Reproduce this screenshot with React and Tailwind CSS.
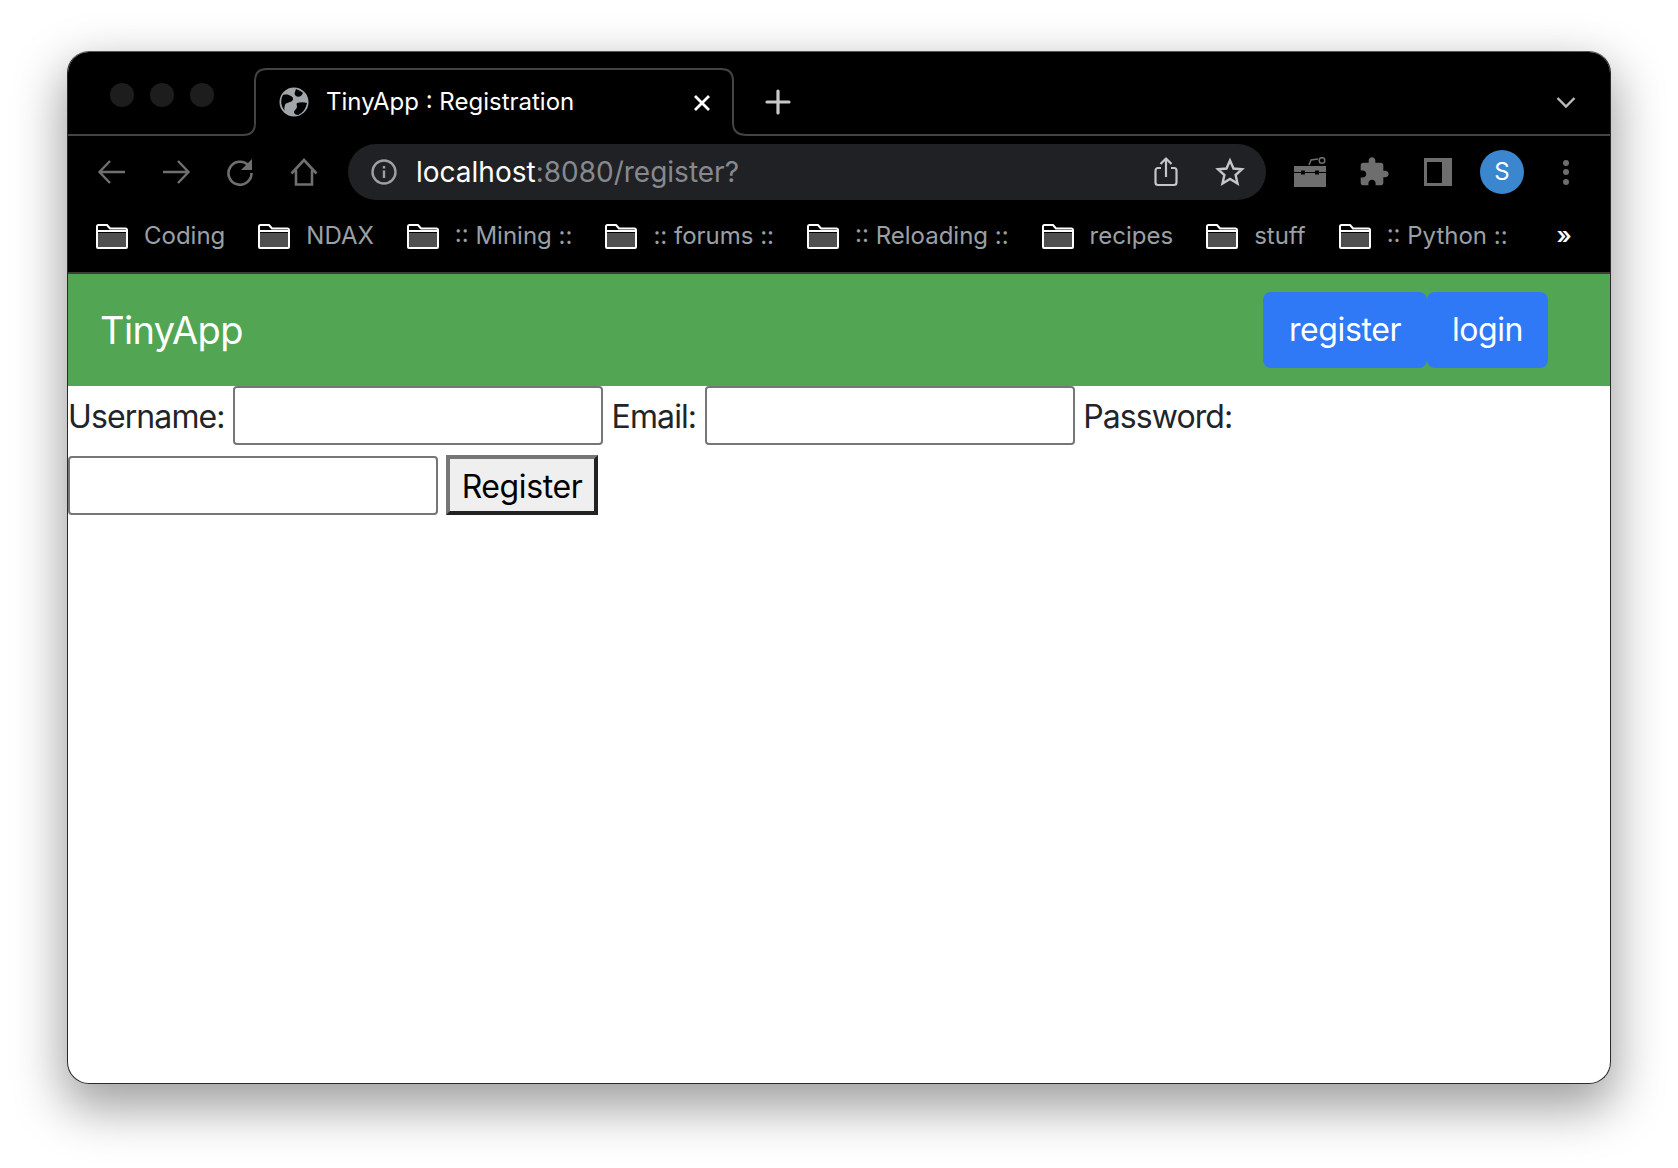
import React from "react";

const Cell = ({ children }) => (
  <div className="flex h-[56px] w-[64px] flex-none items-center justify-center">{children}</div>
);

const Folder = () => (
  <svg width="32" height="25" viewBox="0 0 32 25" className="flex-none">
    <path d="M2 9h28v13.5a1.2 1.2 0 0 1-1.2 1.2H3.2A1.2 1.2 0 0 1 2 22.500z" fill="#505050" />
    <path
      d="M1 2.500A1.500 1.500 0 0 1 2.500 1h8.500l3 3.500h15.500A1.500 1.500 0 0 1 31 6v17a1 1 0 0 1-1 1H2a1 1 0 0 1-1-1zM1 7h30"
      fill="none"
      stroke="#fff"
      strokeWidth="2"
      strokeLinejoin="round"
    />
  </svg>
);

const Bookmark = ({ label }) => (
  <div className="flex flex-none items-center gap-[16px]">
    <Folder />
    <span className="whitespace-nowrap text-[24px] leading-[30px] text-[#9aa0a6]">{label}</span>
  </div>
);

const Field = () => (
  <input
    type="text"
    aria-label="field"
    className="h-[59px] w-[370px] flex-none rounded-[4px] border-2 border-[#767676] bg-white"
  />
);

const bookmarks = [":: Mining ::", ":: forums ::", ":: Reloading ::", "recipes", "stuff", ":: Python ::"];

export default function App() {
  return (
    <div className="h-[1168px] w-[1678px] overflow-hidden bg-white pl-[67px] pt-[51px] font-['Inter','Liberation_Sans',sans-serif]">
      <div className="flex h-[1033px] w-[1544px] flex-col overflow-hidden rounded-[22px] border border-[#2a2a2a] border-t-[#555] bg-white shadow-[0_20px_50px_4px_rgba(0,0,0,0.38)]">
        {/* Tab strip */}
        <div className="relative flex h-[84px] flex-none items-start bg-black">
          <svg className="absolute inset-0" width="1542" height="84" fill="none">
            <path
              d="M0 83h175q12 0 12-12V29q0-12 12-12h454q12 0 12 12v42q0 12 14 12h877"
              stroke="#444"
              strokeWidth="2"
            />
          </svg>
          <div className="relative ml-[42px] mt-[31px] flex gap-[16px]">
            <div className="h-[24px] w-[24px] rounded-full bg-[#1d1d1d]" />
            <div className="h-[24px] w-[24px] rounded-full bg-[#1d1d1d]" />
            <div className="h-[24px] w-[24px] rounded-full bg-[#1d1d1d]" />
          </div>
          <div className="relative ml-[65px] flex h-[68px] w-[435px] flex-none items-center pt-[32px]">
            <svg width="30" height="30" viewBox="0 0 30 30" className="flex-none">
              <circle cx="15" cy="15" r="14.500" fill="#a1a6ab" />
              <path d="M4 8c4-1 6 0 8 1s3 3 1 5-6 1-7 4-1 4 0 6C2 20 1 13 4 8z" fill="#000" />
              <path d="M17 2c3 1 6 3 7 4l-2 3c-2 1-4 1-5 0s-2-2-1-4z" fill="#000" />
              <path d="M18 16c3-1 7-1 10 0-1 5-4 10-9 12-2 0-4-1-4-3s3-3 3-5-1-3 0-4z" fill="#000" />
            </svg>
            <span className="ml-[17px] whitespace-nowrap text-[24px] leading-[30px] text-white">TinyApp : Registration</span>
          </div>
          <svg className="relative ml-[-22px] mt-[41px] flex-none" width="20" height="20" viewBox="0 0 20 20" fill="none" stroke="#fff" strokeWidth="2.800">
            <path d="M3 3l14 14M17 3L3 17" />
          </svg>
          <svg className="relative ml-[53px] mt-[37px] flex-none" width="26" height="26" viewBox="0 0 26 26" fill="none" stroke="#c8c8c8" strokeWidth="3.200" strokeLinecap="round">
            <path d="M13 2v22M2 13h22" />
          </svg>
          <svg className="relative ml-auto mr-[34px] mt-[43px] flex-none" width="20" height="14" viewBox="0 0 20 14" fill="none" stroke="#bdbdbd" strokeWidth="2.400">
            <path d="M1.500 3l8.500 8.500L18.500 3" />
          </svg>
        </div>

        {/* Toolbar */}
        <div className="flex h-[69px] flex-none items-start bg-black pl-[12px] pt-[8px]">
          <Cell>
            <svg width="30" height="26" viewBox="0 0 30 26" fill="none" stroke="#6f6f6f" strokeWidth="2.400">
              <path d="M28 13H3M13 2L2.500 13 13 24" />
            </svg>
          </Cell>
          <Cell>
            <svg width="30" height="26" viewBox="0 0 30 26" fill="none" stroke="#6f6f6f" strokeWidth="2.400">
              <path d="M2 13h25M17 2l10.500 11L17 24" />
            </svg>
          </Cell>
          <Cell>
            <svg width="28" height="28" viewBox="0 0 28 28" fill="none">
              <path d="M22.500 7.500A11.500 11.500 0 1 0 25.500 15" stroke="#6f6f6f" strokeWidth="2.600" />
              <path d="M26 1v11H15z" fill="#6f6f6f" />
            </svg>
          </Cell>
          <Cell>
            <svg width="28" height="28" viewBox="0 0 28 28" fill="none" stroke="#6f6f6f" strokeWidth="2.600">
              <path d="M1.500 15.500L14 2l12.500 13.500M6 12v14.500h16V12" />
            </svg>
          </Cell>
          <div className="ml-[12px] flex h-[56px] w-[918px] flex-none items-center rounded-full bg-[#202124] pl-[23px] pr-[4px]">
            <svg width="26" height="26" viewBox="0 0 26 26" fill="none" stroke="#9aa0a6" strokeWidth="2.400" className="flex-none">
              <circle cx="13" cy="13" r="11.500" />
              <path d="M13 11.500v7.500M13 7v2.500" />
            </svg>
            <span className="ml-[19px] whitespace-nowrap text-[28px] leading-[34px] text-white">
              localhost<span className="text-[#868a8f]">:8080/register?</span>
            </span>
            <div className="ml-auto flex">
              <Cell>
                <svg width="24" height="30" viewBox="0 0 24 30" fill="none" stroke="#c4c7c5" strokeWidth="2.200" strokeLinejoin="round">
                  <path d="M7 11H4a2.500 2.500 0 0 0-2.500 2.500v12A2.500 2.500 0 0 0 4 28h16a2.500 2.500 0 0 0 2.500-2.500v-12A2.500 2.500 0 0 0 20 11h-3M12 20V2M6.500 7L12 1.500 17.500 7" />
                </svg>
              </Cell>
              <Cell>
                <svg width="30" height="30" viewBox="0 0 30 30" fill="none" stroke="#c4c7c5" strokeWidth="2.400" strokeLinejoin="miter">
                  <path d="M15 3.500l3.500 8 8.500.8-6.400 5.700 1.900 8.500L15 22l-7.500 4.500 1.900-8.500L3 12.300l8.500-.8z" />
                </svg>
              </Cell>
            </div>
          </div>
          <div className="ml-[12px] flex">
            <Cell>
              <svg width="32" height="30" viewBox="0 0 32 30" fill="none">
                <path d="M0 9h32v6H0zM0 18h32v12H0z" fill="#6e6e6e" />
                <path d="M0 13h32v5H0z" fill="#6e6e6e" />
                <path d="M0 15.500h32" stroke="#000" strokeWidth="1.200" />
                <path d="M7 13.500h4v4H7zM21 13.500h4v4h-4z" fill="#000" />
                <path d="M15 8l2-5 7-1" stroke="#6e6e6e" strokeWidth="1.500" />
                <circle cx="28" cy="3.500" r="2.800" stroke="#6e6e6e" strokeWidth="1.500" />
              </svg>
            </Cell>
            <Cell>
              <svg width="32" height="32" viewBox="0 0 24 24" fill="#6e6e6e">
                <path d="M20.500 11H19V7c0-1.100-.900-2-2-2h-4V3.500C13 2.120 11.880 1 10.500 1S8 2.120 8 3.500V5H4c-1.100 0-1.990.900-1.990 2v3.800H3.500c1.490 0 2.700 1.210 2.700 2.700s-1.210 2.700-2.700 2.700H2V20c0 1.100.900 2 2 2h3.800v-1.500c0-1.490 1.210-2.700 2.700-2.700 1.490 0 2.700 1.210 2.700 2.700V22H17c1.100 0 2-.900 2-2v-4h1.500c1.380 0 2.500-1.120 2.500-2.500S21.880 11 20.500 11z" />
              </svg>
            </Cell>
            <Cell>
              <div className="h-[28px] w-[28px] bg-[#6e6e6e] pb-[3px] pl-[3px] pr-[10px] pt-[4px]">
                <div className="h-full w-full bg-black" />
              </div>
            </Cell>
            <Cell>
              <div className="flex h-[44px] w-[44px] items-center justify-center rounded-full bg-[#3a86cf] text-[24px] leading-none text-white">S</div>
            </Cell>
            <Cell>
              <div className="flex flex-col gap-[3.500px]">
                <div className="h-[6px] w-[6px] rounded-full bg-[#6e6e6e]" />
                <div className="h-[6px] w-[6px] rounded-full bg-[#6e6e6e]" />
                <div className="h-[6px] w-[6px] rounded-full bg-[#6e6e6e]" />
              </div>
            </Cell>
          </div>
        </div>

        {/* Bookmarks */}
        <div className="flex h-[69px] flex-none items-center border-b-2 border-[#3c3c3c] bg-black pb-[5px] pl-[28px]">
          <div className="flex gap-[33px]">
            <Bookmark label="Coding" />
            <Bookmark label="NDAX" />
            {bookmarks.map((b) => (
              <Bookmark key={b} label={b} />
            ))}
          </div>
          <span className="ml-[49px] text-[24px] font-semibold leading-[30px] text-white">»</span>
        </div>

        {/* Navbar */}
        <div className="flex h-[112px] flex-none items-center bg-[#52a552] pl-[32px] pr-[62px]">
          <span className="text-[38px] leading-[46px] tracking-[-0.6px] text-white">TinyApp</span>
          <div className="ml-auto flex">
            <div className="flex h-[76px] w-[164px] items-center justify-center rounded-[8px] bg-[#3079f6] text-[32px] tracking-[-0.4px] text-white">register</div>
            <div className="flex h-[76px] w-[121px] items-center justify-center rounded-[8px] bg-[#3079f6] text-[32px] tracking-[-0.4px] text-white">login</div>
          </div>
        </div>

        {/* Form */}
        <form className="text-[32px] leading-[48px] tracking-[-0.9px] text-[#212529]">
          <div className="flex items-center gap-[8.500px]">
            <span className="pt-[3px]">Username:</span>
            <Field />
            <span className="pt-[3px]">Email:</span>
            <Field />
            <span className="pt-[3px]">Password:</span>
          </div>
          <div className="mt-[10px] flex items-center gap-[8px]">
            <Field />
            <button
              type="button"
              className="h-[60px] w-[152px] flex-none border-4 border-b-[#222] border-l-[#767676] border-r-[#222] border-t-[#767676] bg-[#efefef] pt-[3px] text-[32px] tracking-[-0.4px] text-black"
            >
              Register
            </button>
          </div>
        </form>
      </div>
    </div>
  );
}
